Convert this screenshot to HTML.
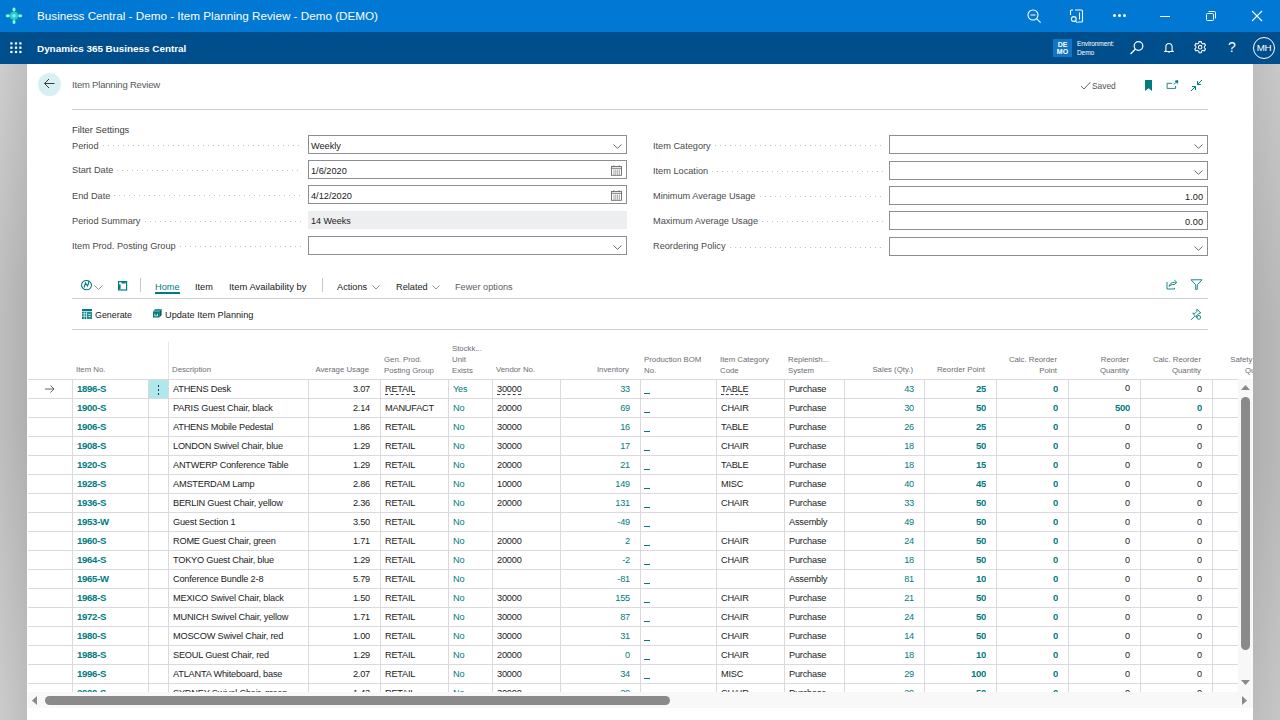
<!DOCTYPE html>
<html><head><meta charset="utf-8">
<style>
*{box-sizing:border-box;margin:0;padding:0}
html,body{width:1280px;height:720px;overflow:hidden}
body{position:relative;font-family:"Liberation Sans",sans-serif;background:#fff;color:#212121}
#lgray{position:absolute;left:0;top:64px;width:27px;height:656px;background:linear-gradient(90deg,rgba(255,255,255,0.06),rgba(0,0,0,0.05)),linear-gradient(180deg,#cacaca 0%,#bababa 35%,#b9b9b9 55%,#c8c8c8 100%)}
.abs{position:absolute}
#title{position:absolute;left:0;top:0;width:1280px;height:32px;background:#0078d4;color:#fff}
#nav{position:absolute;left:0;top:32px;width:1280px;height:32px;background:#004e8c;color:#fff}
#rgray{position:absolute;left:1253px;top:64px;width:27px;height:656px;background:linear-gradient(90deg,rgba(0,0,0,0.04),rgba(255,255,255,0.04)),linear-gradient(180deg,#c6c6c6 0%,#b6b6b6 40%,#b6b6b6 60%,#c4c4c4 100%)}
#panel{position:absolute;left:27px;top:64px;width:1226px;height:656px;background:#fff}
.lbl{position:absolute;font-size:9.2px;line-height:12px;color:#4a4a4a;white-space:nowrap;left:72px}
.dots{position:absolute;height:1px;background-image:linear-gradient(90deg,#c0c0c0 1px,transparent 1px);background-size:5px 1px}
.box{position:absolute;border:1px solid #8a8d91;background:#fff;height:19px}
.box .v{position:absolute;left:2px;top:3.5px;font-size:9.2px;line-height:12px;color:#212121;white-space:nowrap}
.box .vr{position:absolute;right:4px;top:3.5px;font-size:9.2px;line-height:12px;color:#212121}
.chev{position:absolute;right:5px;top:5px}
.c{position:absolute;height:18px;line-height:18px;font-size:9.2px;letter-spacing:-0.2px;white-space:nowrap;overflow:hidden;color:#212121}
.c.r{text-align:right}
.t{color:#007b80}
.tb{color:#007b80;font-weight:bold;font-size:9.6px;letter-spacing:-0.3px}
.ul span{text-decoration:underline dashed #444;text-decoration-thickness:1px;text-underline-offset:2px}
.hl{position:absolute;left:28px;width:1210px;height:1px;background:#d9d9de}
.vl{position:absolute;top:379px;width:1px;height:313px;background:#d9d9de}
.us{position:absolute;width:6px;height:1.2px;background:#007b80}
.hd{position:absolute;font-size:7.8px;line-height:11px;color:#6b6e73;white-space:nowrap}
.hd.r{text-align:right}
.act{position:absolute;font-size:9.2px;line-height:12px;color:#212121;white-space:nowrap;top:281px}
</style></head><body>
<div id="title">
  <svg class="abs" style="left:4px;top:6px" width="20" height="20" viewBox="0 0 20 20">
    <path d="M10 3.3L16.5 9.8 10 16.3 3.5 9.8z" fill="#0a8a8f" stroke="#0a8a8f" stroke-width="2" stroke-linejoin="round"/><circle cx="10" cy="9.8" r="5.6" fill="#0a8a8f"/>
    <circle cx="10" cy="9.8" r="4.1" fill="#1ad0dc"/>
    <circle cx="10" cy="9.8" r="1.8" fill="#8ae6ee"/>
    <ellipse cx="10" cy="3.6" rx="1.5" ry="2" fill="#9ef3fa"/>
    <ellipse cx="10" cy="16" rx="1.5" ry="2" fill="#9ef3fa"/>
    <ellipse cx="3.8" cy="9.8" rx="2" ry="1.5" fill="#9ef3fa"/>
    <ellipse cx="16.2" cy="9.8" rx="2" ry="1.5" fill="#9ef3fa"/>
  </svg>
  <div class="abs" style="left:37px;top:9px;font-size:11.7px;white-space:nowrap">Business Central - Demo - Item Planning Review - Demo (DEMO)</div>
  <svg class="abs" style="left:1026px;top:8px" width="16" height="16" viewBox="0 0 16 16" fill="none" stroke="#fff" stroke-width="1.1">
    <circle cx="7" cy="7" r="5"/><path d="M4.5 7h5M10.6 10.6l4 4"/>
  </svg>
  <svg class="abs" style="left:1069px;top:8px" width="16" height="16" viewBox="0 0 16 16" fill="none" stroke="#fff" stroke-width="1.1">
    <path d="M6 2h6.5a1 1 0 0 1 1 1v10a1 1 0 0 1-1 1H9M1.5 7V3a1 1 0 0 1 1-1H4"/><path d="M10.5 4.5v7"/><circle cx="4.8" cy="11" r="2.4"/><path d="M6.5 12.8l2 2"/>
  </svg>
  <div class="abs" style="left:1113px;top:14px;width:3px;height:3px;border-radius:50%;background:#fff"></div>
  <div class="abs" style="left:1118px;top:14px;width:3px;height:3px;border-radius:50%;background:#fff"></div>
  <div class="abs" style="left:1123px;top:14px;width:3px;height:3px;border-radius:50%;background:#fff"></div>
  <div class="abs" style="left:1160px;top:16px;width:10px;height:1px;background:#fff"></div>
  <svg class="abs" style="left:1204px;top:9px" width="14" height="14" viewBox="0 0 14 14" fill="none" stroke="#fff" stroke-width="1">
    <rect x="2.5" y="4.5" width="7" height="7" rx="1"/><path d="M4.5 2.5h6a1 1 0 0 1 1 1v6"/>
  </svg>
  <svg class="abs" style="left:1250px;top:9px" width="14" height="14" viewBox="0 0 14 14" fill="none" stroke="#fff" stroke-width="1.1">
    <path d="M2 2l10 10M12 2L2 12"/>
  </svg>
</div>
<div id="nav">
  <svg class="abs" style="left:10px;top:10px" width="12" height="12" viewBox="0 0 12 12" fill="#fff">
    <rect x="0.3" y="0.3" width="2.2" height="2.2"/><rect x="4.9" y="0.3" width="2.2" height="2.2"/><rect x="9.3" y="0.3" width="2.2" height="2.2"/>
    <rect x="0.3" y="4.6" width="2.2" height="2.2"/><rect x="4.9" y="4.6" width="2.2" height="2.2"/><rect x="9.3" y="4.6" width="2.2" height="2.2"/>
    <rect x="0.3" y="8.9" width="2.2" height="2.2"/><rect x="4.9" y="8.9" width="2.2" height="2.2"/><rect x="9.3" y="8.9" width="2.2" height="2.2"/>
  </svg>
  <div class="abs" style="left:37px;top:11px;font-size:9.9px;font-weight:bold;white-space:nowrap">Dynamics 365 Business Central</div>
  <div class="abs" style="left:1053px;top:7px;width:19px;height:18px;background:#1174c4;color:#fff;font-size:7px;font-weight:bold;line-height:7.5px;text-align:center;padding-top:1.5px">DE<br>MO</div>
  <div class="abs" style="left:1077px;top:6.5px;font-size:6.6px;letter-spacing:-0.15px;line-height:9px;white-space:nowrap">Environment:<br>Demo</div>
  <svg class="abs" style="left:1128px;top:39px;top:7px" width="18" height="18" viewBox="0 0 18 18" fill="none" stroke="#fff" stroke-width="1.2">
    <circle cx="10.5" cy="7" r="4.3"/><path d="M7.5 10L2.5 15"/>
  </svg>
  <svg class="abs" style="left:1163.5px;top:10px" width="10" height="12" viewBox="0 0 10 12" fill="none" stroke="#fff" stroke-width="1.1">
    <path d="M1.9 8.6V4.6a3.1 3.1 0 0 1 6.2 0v4l1 .9H0.9z"/><path d="M4 10.3h2L5 11.3z" fill="#fff" stroke="none"/>
  </svg>
  <svg class="abs" style="left:1194.2px;top:9.3px" width="12.3" height="12.3" viewBox="1.5 1.5 14 14" fill="none" stroke="#fff" stroke-width="1.2">
    <circle cx="8.5" cy="8.5" r="2"/>
    <path d="M7.3 2.2h2.4l.5 1.8 1.4.8 1.8-.5 1.2 2.1-1.3 1.3v1.6l1.3 1.3-1.2 2.1-1.8-.5-1.4.8-.5 1.8H7.3l-.5-1.8-1.4-.8-1.8.5-1.2-2.1 1.3-1.3V7.7L2.4 6.4l1.2-2.1 1.8.5 1.4-.8z"/>
  </svg>
  <div class="abs" style="left:1228px;top:7px;font-size:14px;white-space:nowrap">?</div>
  <div class="abs" style="left:1253px;top:5px;width:22px;height:22px;border:1.2px solid #fff;border-radius:50%;font-size:9.8px;letter-spacing:-0.4px;line-height:20px;text-align:center">MH</div>
</div>
<div id="lgray"></div><div id="rgray"></div>
<div id="panel"></div>

<!-- page header -->
<div class="abs" style="left:38px;top:73px;width:23px;height:23px;border-radius:50%;background:#d8f0f3"></div>
<svg class="abs" style="left:43px;top:77px" width="13" height="13" viewBox="0 0 13 13" fill="none" stroke="#3a3a3a" stroke-width="1">
  <path d="M1.5 6.5h10M6 2L1.5 6.5 6 11"/>
</svg>
<div class="abs" style="left:72px;top:79px;font-size:9.5px;letter-spacing:-0.2px;color:#555a60;white-space:nowrap">Item Planning Review</div>
<svg class="abs" style="left:1080px;top:81px" width="11" height="9" viewBox="0 0 11 9" fill="none" stroke="#555" stroke-width="0.9">
  <path d="M1 5l3 3 6.5-7"/>
</svg>
<div class="abs" style="left:1092px;top:80px;font-size:8.4px;line-height:12px;color:#505050;white-space:nowrap">Saved</div>
<svg class="abs" style="left:1144px;top:80px" width="9" height="11" viewBox="0 0 9 11">
  <path d="M1 0h7v11L4.5 8.3 1 11z" fill="#007b80"/>
</svg>
<svg class="abs" style="left:1166px;top:80px" width="13" height="10" viewBox="0 0 13 10" fill="none" stroke="#007b80" stroke-width="0.9">
  <path d="M6.3 3.3H1.1v5.1h8.5V5.9"/><path d="M7.6 4.6l3-2.7"/><path d="M9.2 1.1l2.7-.5-.4 2.7z" fill="#007b80"/>
</svg>
<svg class="abs" style="left:1190px;top:79px" width="13" height="13" viewBox="0 0 13 13" fill="none" stroke="#007b80" stroke-width="1">
  <path d="M12 1L7.5 5.5M7.5 2v3.5H11M1 12l4.5-4.5M2 7.5h3.5V11"/>
</svg>
<div class="abs" style="left:72px;top:109px;width:1136px;height:1px;background:#cfd0d4"></div>

<!-- filter settings -->
<div class="lbl" style="top:124px;font-size:9.4px;color:#3c3c3c">Filter Settings</div>
<div class="lbl" style="top:139.8px">Period</div>
<div class="dots" style="left:103px;top:145px;width:199px"></div>
<div class="box" style="left:308px;top:135px;width:319px"><div class="v">Weekly</div><svg class="chev" style="right:4px;top:7.5px" width="9" height="5" viewBox="0 0 9 5" fill="none" stroke="#444" stroke-width="0.8"><path d="M0.5 0.5l4 3.8 4-3.8"/></svg></div>
<div class="lbl" style="top:163.7px">Start Date</div>
<div class="dots" style="left:117px;top:170px;width:185px"></div>
<div class="box" style="left:308px;top:160px;width:319px"><div class="v">1/6/2020</div><svg class="chev" style="top:3.5px;right:4px" width="11" height="11" viewBox="0 0 11 11" fill="none" stroke="#6a6a6a" stroke-width="0.9"><rect x="0.5" y="1.5" width="10" height="8.8"/><path d="M0.5 3.3h10M2.8 0.3v1.5M8.2 0.3v1.5"/><path d="M3 4.5v5.3M4.8 4.5v5.3M6.6 4.5v5.3M8.4 4.5v5.3" stroke-width="0.6"/></svg></div>
<div class="lbl" style="top:189.8px">End Date</div>
<div class="dots" style="left:114px;top:195px;width:188px"></div>
<div class="box" style="left:308px;top:185px;width:319px"><div class="v">4/12/2020</div><svg class="chev" style="top:3.5px;right:4px" width="11" height="11" viewBox="0 0 11 11" fill="none" stroke="#6a6a6a" stroke-width="0.9"><rect x="0.5" y="1.5" width="10" height="8.8"/><path d="M0.5 3.3h10M2.8 0.3v1.5M8.2 0.3v1.5"/><path d="M3 4.5v5.3M4.8 4.5v5.3M6.6 4.5v5.3M8.4 4.5v5.3" stroke-width="0.6"/></svg></div>
<div class="lbl" style="top:214.6px">Period Summary</div>
<div class="dots" style="left:145px;top:221px;width:157px"></div>
<div class="abs" style="left:308px;top:211px;width:319px;height:18px;background:#edeef0"><div class="abs" style="left:3px;top:4px;font-size:9px;line-height:12px;color:#212121;white-space:nowrap">14 Weeks</div></div>
<div class="lbl" style="top:239.6px">Item Prod. Posting Group</div>
<div class="dots" style="left:180px;top:246px;width:122px"></div>
<div class="box" style="left:308px;top:236px;width:319px"><div class="v"></div><svg class="chev" style="right:4px;top:7.5px" width="9" height="5" viewBox="0 0 9 5" fill="none" stroke="#444" stroke-width="0.8"><path d="M0.5 0.5l4 3.8 4-3.8"/></svg></div>
<div class="lbl" style="left:653px;top:139.9px">Item Category</div>
<div class="dots" style="left:715px;top:145px;width:168px"></div>
<div class="box" style="left:889px;top:135px;width:319px"><svg class="chev" style="right:4px;top:7.5px" width="9" height="5" viewBox="0 0 9 5" fill="none" stroke="#444" stroke-width="0.8"><path d="M0.5 0.5l4 3.8 4-3.8"/></svg></div>
<div class="lbl" style="left:653px;top:164.9px">Item Location</div>
<div class="dots" style="left:712px;top:171px;width:171px"></div>
<div class="box" style="left:889px;top:161px;width:319px"><svg class="chev" style="right:4px;top:7.5px" width="9" height="5" viewBox="0 0 9 5" fill="none" stroke="#444" stroke-width="0.8"><path d="M0.5 0.5l4 3.8 4-3.8"/></svg></div>
<div class="lbl" style="left:653px;top:189.9px">Minimum Average Usage</div>
<div class="dots" style="left:760px;top:196px;width:123px"></div>
<div class="box" style="left:889px;top:186px;width:319px"><div class="vr">1.00</div></div>
<div class="lbl" style="left:653px;top:215.2px">Maximum Average Usage</div>
<div class="dots" style="left:762px;top:221px;width:121px"></div>
<div class="box" style="left:889px;top:211px;width:319px"><div class="vr">0.00</div></div>
<div class="lbl" style="left:653px;top:240.2px">Reordering Policy</div>
<div class="dots" style="left:730px;top:247px;width:153px"></div>
<div class="box" style="left:889px;top:237px;width:319px"><svg class="chev" style="right:4px;top:7.5px" width="9" height="5" viewBox="0 0 9 5" fill="none" stroke="#444" stroke-width="0.8"><path d="M0.5 0.5l4 3.8 4-3.8"/></svg></div>

<!-- action bar -->
<svg class="abs" style="left:80px;top:279px" width="13" height="12" viewBox="0 0 13 12" fill="none" stroke="#007b80" stroke-width="1.1"><path d="M6.5 1.5c2.8 0 5 2 5 4.6S9.3 10.8 6.5 10.8 1.5 8.7 1.5 6.1 3.7 1.5 6.5 1.5z"/><path d="M4 8.5l1.5-4.5 2 3 1.3-3.5M8 2.5l1 1"/></svg>
<svg class="abs" style="left:94px;top:284.5px" width="9" height="5" viewBox="0 0 9 5" fill="none" stroke="#777" stroke-width="0.8"><path d="M0.5 0.5l4 4 4-4"/></svg>
<svg class="abs" style="left:117px;top:280px" width="11" height="11" viewBox="0 0 11 11" fill="none" stroke="#007b80" stroke-width="1.2"><rect x="1.6" y="1.6" width="8" height="8.4"/><path d="M4.5 2.8h4.2M2.8 4.5v4.5" stroke-width="1.6"/></svg>
<div class="abs" style="left:140px;top:278px;width:1px;height:14px;background:#c8c8c8"></div>
<div class="act" style="left:155px;color:#007b80">Home</div>
<div class="abs" style="left:155px;top:292px;width:25px;height:1.5px;background:#007b80"></div>
<div class="act" style="left:195px">Item</div>
<div class="act" style="left:229px;font-size:9.45px">Item Availability by</div>
<div class="abs" style="left:322px;top:278px;width:1px;height:14px;background:#c8c8c8"></div>
<div class="act" style="left:337px">Actions</div>
<svg class="abs" style="left:371.5px;top:284.5px" width="8" height="5" viewBox="0 0 8 5" fill="none" stroke="#777" stroke-width="0.8"><path d="M0.5 0.5l3.5 3.5 3.5-3.5"/></svg>
<div class="act" style="left:396px">Related</div>
<svg class="abs" style="left:431.5px;top:284.5px" width="8" height="5" viewBox="0 0 8 5" fill="none" stroke="#777" stroke-width="0.8"><path d="M0.5 0.5l3.5 3.5 3.5-3.5"/></svg>
<div class="act" style="left:455px;color:#5a6068">Fewer options</div>
<svg class="abs" style="left:1166px;top:279px" width="13" height="11" viewBox="0 0 13 11" fill="none" stroke="#007b80" stroke-width="0.9"><path d="M1 3v7h7.5V8.8"/><path d="M3.2 7.5C3.5 4.8 5.5 3.3 8.5 3.3h1.3M8.3 1l2.5 2.3L8.3 5.6"/><path d="M3.2 7.5c1-1.6 2.8-2.2 5.3-2" /></svg>
<svg class="abs" style="left:1190px;top:279px" width="13" height="12" viewBox="0 0 13 12" fill="none" stroke="#007b80" stroke-width="0.9"><path d="M1 0.8h11L7.3 5.8v4.6H5.7V5.8z"/></svg>
<svg class="abs" style="left:82px;top:309px" width="10" height="10" viewBox="0 0 10 10" fill="#007b80"><rect x="0" y="0" width="10" height="2.2"/><rect x="0" y="2.9" width="1.8" height="1.6"/><rect x="2.5" y="2.9" width="1.8" height="1.6"/><rect x="0" y="5.2" width="1.8" height="1.6"/><rect x="2.5" y="5.2" width="1.8" height="1.6"/><rect x="0" y="7.5" width="1.8" height="2.5"/><rect x="2.5" y="7.5" width="1.8" height="2.5"/><path d="M5 2.9h5V10H5z" opacity="0.85"/><path d="M6.5 5.5h2M6.5 7.5h2" stroke="#fff" stroke-width="0.8"/></svg>
<div class="act" style="left:95px;top:309px;font-size:8.9px">Generate</div>
<svg class="abs" style="left:152.5px;top:309.3px" width="9" height="9" viewBox="0 0 9 9"><path d="M0 2.3h6.3V8.5H0z" fill="#007b80"/><path d="M0 2.3L2.2 0H8.6L6.3 2.3z" fill="#2b9a9e"/><path d="M6.3 2.3L8.6 0V6.2L6.3 8.5z" fill="#005f63"/><path d="M1.8 4.8v2h2.7v-2" fill="none" stroke="#fff" stroke-width="0.8"/></svg>
<div class="act" style="left:165px;top:309px">Update Item Planning</div>
<svg class="abs" style="left:1190px;top:308px" width="13" height="13" viewBox="0 0 13 13" fill="none" stroke="#007b80" stroke-width="0.9"><path d="M7 1.2l3.8 3.8-2 .5-2 2 .2 2.1L2.7 5.3l2.1.2 2-2z"/><path d="M4.8 8.2L1.2 11.8"/><circle cx="8.8" cy="9.4" r="1.9"/></svg>
<div class="abs" style="left:72px;top:298px;width:1136px;height:1px;background:#d2d3d8"></div>
<div class="abs" style="left:72px;top:329px;width:1136px;height:1px;background:#d2d3d8"></div>

<!-- table -->
<div class="abs" style="left:0;top:0;width:1253px;height:379px;overflow:hidden">
<div class="hd" style="left:76px;width:76px;top:364.3px">Item No.</div>
<div class="hd" style="left:172px;width:140px;top:364.3px">Description</div>
<div class="hd r" style="left:308px;width:61px;top:364.3px">Average Usage</div>
<div class="hd" style="left:384px;width:68px;top:354.3px">Gen. Prod.<br>Posting Group</div>
<div class="hd" style="left:452px;width:44px;top:343.3px">Stockk...<br>Unit<br>Exists</div>
<div class="hd" style="left:496px;width:68px;top:364.3px">Vendor No.</div>
<div class="hd r" style="left:560px;width:69px;top:364.3px">Inventory</div>
<div class="hd" style="left:644px;width:76px;top:354.3px">Production BOM<br>No.</div>
<div class="hd" style="left:720px;width:68px;top:354.3px">Item Category<br>Code</div>
<div class="hd" style="left:788px;width:60px;top:354.3px">Replenish...<br>System</div>
<div class="hd r" style="left:844px;width:69px;top:364.3px">Sales (Qty.)</div>
<div class="hd r" style="left:924px;width:61px;top:364.3px">Reorder Point</div>
<div class="hd r" style="left:996px;width:61px;top:354.3px">Calc. Reorder<br>Point</div>
<div class="hd r" style="left:1068px;width:61px;top:354.3px">Reorder<br>Quantity</div>
<div class="hd r" style="left:1140px;width:61px;top:354.3px">Calc. Reorder<br>Quantity</div>
<div class="hd r" style="left:1212px;width:62px;top:354.3px">Safety Stock<br>Quantity</div>
</div>
<div class="abs" style="left:0;top:0;width:1238px;height:692px;overflow:hidden">
<div class="abs" style="left:168px;top:342px;width:1px;height:37px;background:#e6e6ea"></div>
<div class="abs" style="left:149px;top:380px;width:19px;height:18px;background:#afe8ea"></div>
<div class="hl" style="top:379px"></div>
<div class="c tb" style="left:77px;width:71px;top:380px">1896-S</div>
<div class="c " style="left:173px;width:135px;top:380px">ATHENS Desk</div>
<div class="c r " style="left:308px;width:62px;top:380px">3.07</div>
<div class="c ul" style="left:385px;width:63px;top:380px"><span>RETAIL</span></div>
<div class="c t" style="left:453px;width:39px;top:380px">Yes</div>
<div class="c ul" style="left:497px;width:63px;top:380px"><span>30000</span></div>
<div class="c r t" style="left:560px;width:70px;top:380px">33</div>
<div class="us" style="left:644px;top:393px"></div>
<div class="c ul" style="left:721px;width:63px;top:380px"><span>TABLE</span></div>
<div class="c " style="left:789px;width:55px;top:380px">Purchase</div>
<div class="c r t" style="left:844px;width:70px;top:380px">43</div>
<div class="c r tb" style="left:924px;width:62px;top:380px">25</div>
<div class="c r tb" style="left:996px;width:62px;top:380px">0</div>
<div class="c r " style="left:1068px;width:62px;top:379px">0</div>
<div class="c r " style="left:1140px;width:62px;top:380px">0</div>
<div class="hl" style="top:398px"></div>
<div class="c tb" style="left:77px;width:71px;top:399px">1900-S</div>
<div class="c " style="left:173px;width:135px;top:399px">PARIS Guest Chair, black</div>
<div class="c r " style="left:308px;width:62px;top:399px">2.14</div>
<div class="c " style="left:385px;width:63px;top:399px">MANUFACT</div>
<div class="c t" style="left:453px;width:39px;top:399px">No</div>
<div class="c " style="left:497px;width:63px;top:399px">20000</div>
<div class="c r t" style="left:560px;width:70px;top:399px">69</div>
<div class="us" style="left:644px;top:412px"></div>
<div class="c " style="left:721px;width:63px;top:399px">CHAIR</div>
<div class="c " style="left:789px;width:55px;top:399px">Purchase</div>
<div class="c r t" style="left:844px;width:70px;top:399px">30</div>
<div class="c r tb" style="left:924px;width:62px;top:399px">50</div>
<div class="c r tb" style="left:996px;width:62px;top:399px">0</div>
<div class="c r tb" style="left:1068px;width:62px;top:399px">500</div>
<div class="c r tb" style="left:1140px;width:62px;top:399px">0</div>
<div class="hl" style="top:417px"></div>
<div class="c tb" style="left:77px;width:71px;top:418px">1906-S</div>
<div class="c " style="left:173px;width:135px;top:418px">ATHENS Mobile Pedestal</div>
<div class="c r " style="left:308px;width:62px;top:418px">1.86</div>
<div class="c " style="left:385px;width:63px;top:418px">RETAIL</div>
<div class="c t" style="left:453px;width:39px;top:418px">No</div>
<div class="c " style="left:497px;width:63px;top:418px">30000</div>
<div class="c r t" style="left:560px;width:70px;top:418px">16</div>
<div class="us" style="left:644px;top:431px"></div>
<div class="c " style="left:721px;width:63px;top:418px">TABLE</div>
<div class="c " style="left:789px;width:55px;top:418px">Purchase</div>
<div class="c r t" style="left:844px;width:70px;top:418px">26</div>
<div class="c r tb" style="left:924px;width:62px;top:418px">25</div>
<div class="c r tb" style="left:996px;width:62px;top:418px">0</div>
<div class="c r " style="left:1068px;width:62px;top:418px">0</div>
<div class="c r " style="left:1140px;width:62px;top:418px">0</div>
<div class="hl" style="top:436px"></div>
<div class="c tb" style="left:77px;width:71px;top:437px">1908-S</div>
<div class="c " style="left:173px;width:135px;top:437px">LONDON Swivel Chair, blue</div>
<div class="c r " style="left:308px;width:62px;top:437px">1.29</div>
<div class="c " style="left:385px;width:63px;top:437px">RETAIL</div>
<div class="c t" style="left:453px;width:39px;top:437px">No</div>
<div class="c " style="left:497px;width:63px;top:437px">30000</div>
<div class="c r t" style="left:560px;width:70px;top:437px">17</div>
<div class="us" style="left:644px;top:450px"></div>
<div class="c " style="left:721px;width:63px;top:437px">CHAIR</div>
<div class="c " style="left:789px;width:55px;top:437px">Purchase</div>
<div class="c r t" style="left:844px;width:70px;top:437px">18</div>
<div class="c r tb" style="left:924px;width:62px;top:437px">50</div>
<div class="c r tb" style="left:996px;width:62px;top:437px">0</div>
<div class="c r " style="left:1068px;width:62px;top:437px">0</div>
<div class="c r " style="left:1140px;width:62px;top:437px">0</div>
<div class="hl" style="top:455px"></div>
<div class="c tb" style="left:77px;width:71px;top:456px">1920-S</div>
<div class="c " style="left:173px;width:135px;top:456px">ANTWERP Conference Table</div>
<div class="c r " style="left:308px;width:62px;top:456px">1.29</div>
<div class="c " style="left:385px;width:63px;top:456px">RETAIL</div>
<div class="c t" style="left:453px;width:39px;top:456px">No</div>
<div class="c " style="left:497px;width:63px;top:456px">20000</div>
<div class="c r t" style="left:560px;width:70px;top:456px">21</div>
<div class="us" style="left:644px;top:469px"></div>
<div class="c " style="left:721px;width:63px;top:456px">TABLE</div>
<div class="c " style="left:789px;width:55px;top:456px">Purchase</div>
<div class="c r t" style="left:844px;width:70px;top:456px">18</div>
<div class="c r tb" style="left:924px;width:62px;top:456px">15</div>
<div class="c r tb" style="left:996px;width:62px;top:456px">0</div>
<div class="c r " style="left:1068px;width:62px;top:456px">0</div>
<div class="c r " style="left:1140px;width:62px;top:456px">0</div>
<div class="hl" style="top:474px"></div>
<div class="c tb" style="left:77px;width:71px;top:475px">1928-S</div>
<div class="c " style="left:173px;width:135px;top:475px">AMSTERDAM Lamp</div>
<div class="c r " style="left:308px;width:62px;top:475px">2.86</div>
<div class="c " style="left:385px;width:63px;top:475px">RETAIL</div>
<div class="c t" style="left:453px;width:39px;top:475px">No</div>
<div class="c " style="left:497px;width:63px;top:475px">10000</div>
<div class="c r t" style="left:560px;width:70px;top:475px">149</div>
<div class="us" style="left:644px;top:488px"></div>
<div class="c " style="left:721px;width:63px;top:475px">MISC</div>
<div class="c " style="left:789px;width:55px;top:475px">Purchase</div>
<div class="c r t" style="left:844px;width:70px;top:475px">40</div>
<div class="c r tb" style="left:924px;width:62px;top:475px">45</div>
<div class="c r tb" style="left:996px;width:62px;top:475px">0</div>
<div class="c r " style="left:1068px;width:62px;top:475px">0</div>
<div class="c r " style="left:1140px;width:62px;top:475px">0</div>
<div class="hl" style="top:493px"></div>
<div class="c tb" style="left:77px;width:71px;top:494px">1936-S</div>
<div class="c " style="left:173px;width:135px;top:494px">BERLIN Guest Chair, yellow</div>
<div class="c r " style="left:308px;width:62px;top:494px">2.36</div>
<div class="c " style="left:385px;width:63px;top:494px">RETAIL</div>
<div class="c t" style="left:453px;width:39px;top:494px">No</div>
<div class="c " style="left:497px;width:63px;top:494px">20000</div>
<div class="c r t" style="left:560px;width:70px;top:494px">131</div>
<div class="us" style="left:644px;top:507px"></div>
<div class="c " style="left:721px;width:63px;top:494px">CHAIR</div>
<div class="c " style="left:789px;width:55px;top:494px">Purchase</div>
<div class="c r t" style="left:844px;width:70px;top:494px">33</div>
<div class="c r tb" style="left:924px;width:62px;top:494px">50</div>
<div class="c r tb" style="left:996px;width:62px;top:494px">0</div>
<div class="c r " style="left:1068px;width:62px;top:494px">0</div>
<div class="c r " style="left:1140px;width:62px;top:494px">0</div>
<div class="hl" style="top:512px"></div>
<div class="c tb" style="left:77px;width:71px;top:513px">1953-W</div>
<div class="c " style="left:173px;width:135px;top:513px">Guest Section 1</div>
<div class="c r " style="left:308px;width:62px;top:513px">3.50</div>
<div class="c " style="left:385px;width:63px;top:513px">RETAIL</div>
<div class="c t" style="left:453px;width:39px;top:513px">No</div>

<div class="c r t" style="left:560px;width:70px;top:513px">-49</div>
<div class="us" style="left:644px;top:526px"></div>

<div class="c " style="left:789px;width:55px;top:513px">Assembly</div>
<div class="c r t" style="left:844px;width:70px;top:513px">49</div>
<div class="c r tb" style="left:924px;width:62px;top:513px">50</div>
<div class="c r tb" style="left:996px;width:62px;top:513px">0</div>
<div class="c r " style="left:1068px;width:62px;top:513px">0</div>
<div class="c r " style="left:1140px;width:62px;top:513px">0</div>
<div class="hl" style="top:531px"></div>
<div class="c tb" style="left:77px;width:71px;top:532px">1960-S</div>
<div class="c " style="left:173px;width:135px;top:532px">ROME Guest Chair, green</div>
<div class="c r " style="left:308px;width:62px;top:532px">1.71</div>
<div class="c " style="left:385px;width:63px;top:532px">RETAIL</div>
<div class="c t" style="left:453px;width:39px;top:532px">No</div>
<div class="c " style="left:497px;width:63px;top:532px">20000</div>
<div class="c r t" style="left:560px;width:70px;top:532px">2</div>
<div class="us" style="left:644px;top:545px"></div>
<div class="c " style="left:721px;width:63px;top:532px">CHAIR</div>
<div class="c " style="left:789px;width:55px;top:532px">Purchase</div>
<div class="c r t" style="left:844px;width:70px;top:532px">24</div>
<div class="c r tb" style="left:924px;width:62px;top:532px">50</div>
<div class="c r tb" style="left:996px;width:62px;top:532px">0</div>
<div class="c r " style="left:1068px;width:62px;top:532px">0</div>
<div class="c r " style="left:1140px;width:62px;top:532px">0</div>
<div class="hl" style="top:550px"></div>
<div class="c tb" style="left:77px;width:71px;top:551px">1964-S</div>
<div class="c " style="left:173px;width:135px;top:551px">TOKYO Guest Chair, blue</div>
<div class="c r " style="left:308px;width:62px;top:551px">1.29</div>
<div class="c " style="left:385px;width:63px;top:551px">RETAIL</div>
<div class="c t" style="left:453px;width:39px;top:551px">No</div>
<div class="c " style="left:497px;width:63px;top:551px">20000</div>
<div class="c r t" style="left:560px;width:70px;top:551px">-2</div>
<div class="us" style="left:644px;top:564px"></div>
<div class="c " style="left:721px;width:63px;top:551px">CHAIR</div>
<div class="c " style="left:789px;width:55px;top:551px">Purchase</div>
<div class="c r t" style="left:844px;width:70px;top:551px">18</div>
<div class="c r tb" style="left:924px;width:62px;top:551px">50</div>
<div class="c r tb" style="left:996px;width:62px;top:551px">0</div>
<div class="c r " style="left:1068px;width:62px;top:551px">0</div>
<div class="c r " style="left:1140px;width:62px;top:551px">0</div>
<div class="hl" style="top:569px"></div>
<div class="c tb" style="left:77px;width:71px;top:570px">1965-W</div>
<div class="c " style="left:173px;width:135px;top:570px">Conference Bundle 2-8</div>
<div class="c r " style="left:308px;width:62px;top:570px">5.79</div>
<div class="c " style="left:385px;width:63px;top:570px">RETAIL</div>
<div class="c t" style="left:453px;width:39px;top:570px">No</div>

<div class="c r t" style="left:560px;width:70px;top:570px">-81</div>
<div class="us" style="left:644px;top:583px"></div>

<div class="c " style="left:789px;width:55px;top:570px">Assembly</div>
<div class="c r t" style="left:844px;width:70px;top:570px">81</div>
<div class="c r tb" style="left:924px;width:62px;top:570px">10</div>
<div class="c r tb" style="left:996px;width:62px;top:570px">0</div>
<div class="c r " style="left:1068px;width:62px;top:570px">0</div>
<div class="c r " style="left:1140px;width:62px;top:570px">0</div>
<div class="hl" style="top:588px"></div>
<div class="c tb" style="left:77px;width:71px;top:589px">1968-S</div>
<div class="c " style="left:173px;width:135px;top:589px">MEXICO Swivel Chair, black</div>
<div class="c r " style="left:308px;width:62px;top:589px">1.50</div>
<div class="c " style="left:385px;width:63px;top:589px">RETAIL</div>
<div class="c t" style="left:453px;width:39px;top:589px">No</div>
<div class="c " style="left:497px;width:63px;top:589px">30000</div>
<div class="c r t" style="left:560px;width:70px;top:589px">155</div>
<div class="us" style="left:644px;top:602px"></div>
<div class="c " style="left:721px;width:63px;top:589px">CHAIR</div>
<div class="c " style="left:789px;width:55px;top:589px">Purchase</div>
<div class="c r t" style="left:844px;width:70px;top:589px">21</div>
<div class="c r tb" style="left:924px;width:62px;top:589px">50</div>
<div class="c r tb" style="left:996px;width:62px;top:589px">0</div>
<div class="c r " style="left:1068px;width:62px;top:589px">0</div>
<div class="c r " style="left:1140px;width:62px;top:589px">0</div>
<div class="hl" style="top:607px"></div>
<div class="c tb" style="left:77px;width:71px;top:608px">1972-S</div>
<div class="c " style="left:173px;width:135px;top:608px">MUNICH Swivel Chair, yellow</div>
<div class="c r " style="left:308px;width:62px;top:608px">1.71</div>
<div class="c " style="left:385px;width:63px;top:608px">RETAIL</div>
<div class="c t" style="left:453px;width:39px;top:608px">No</div>
<div class="c " style="left:497px;width:63px;top:608px">30000</div>
<div class="c r t" style="left:560px;width:70px;top:608px">87</div>
<div class="us" style="left:644px;top:621px"></div>
<div class="c " style="left:721px;width:63px;top:608px">CHAIR</div>
<div class="c " style="left:789px;width:55px;top:608px">Purchase</div>
<div class="c r t" style="left:844px;width:70px;top:608px">24</div>
<div class="c r tb" style="left:924px;width:62px;top:608px">50</div>
<div class="c r tb" style="left:996px;width:62px;top:608px">0</div>
<div class="c r " style="left:1068px;width:62px;top:608px">0</div>
<div class="c r " style="left:1140px;width:62px;top:608px">0</div>
<div class="hl" style="top:626px"></div>
<div class="c tb" style="left:77px;width:71px;top:627px">1980-S</div>
<div class="c " style="left:173px;width:135px;top:627px">MOSCOW Swivel Chair, red</div>
<div class="c r " style="left:308px;width:62px;top:627px">1.00</div>
<div class="c " style="left:385px;width:63px;top:627px">RETAIL</div>
<div class="c t" style="left:453px;width:39px;top:627px">No</div>
<div class="c " style="left:497px;width:63px;top:627px">30000</div>
<div class="c r t" style="left:560px;width:70px;top:627px">31</div>
<div class="us" style="left:644px;top:640px"></div>
<div class="c " style="left:721px;width:63px;top:627px">CHAIR</div>
<div class="c " style="left:789px;width:55px;top:627px">Purchase</div>
<div class="c r t" style="left:844px;width:70px;top:627px">14</div>
<div class="c r tb" style="left:924px;width:62px;top:627px">50</div>
<div class="c r tb" style="left:996px;width:62px;top:627px">0</div>
<div class="c r " style="left:1068px;width:62px;top:627px">0</div>
<div class="c r " style="left:1140px;width:62px;top:627px">0</div>
<div class="hl" style="top:645px"></div>
<div class="c tb" style="left:77px;width:71px;top:646px">1988-S</div>
<div class="c " style="left:173px;width:135px;top:646px">SEOUL Guest Chair, red</div>
<div class="c r " style="left:308px;width:62px;top:646px">1.29</div>
<div class="c " style="left:385px;width:63px;top:646px">RETAIL</div>
<div class="c t" style="left:453px;width:39px;top:646px">No</div>
<div class="c " style="left:497px;width:63px;top:646px">20000</div>
<div class="c r t" style="left:560px;width:70px;top:646px">0</div>
<div class="us" style="left:644px;top:659px"></div>
<div class="c " style="left:721px;width:63px;top:646px">CHAIR</div>
<div class="c " style="left:789px;width:55px;top:646px">Purchase</div>
<div class="c r t" style="left:844px;width:70px;top:646px">18</div>
<div class="c r tb" style="left:924px;width:62px;top:646px">10</div>
<div class="c r tb" style="left:996px;width:62px;top:646px">0</div>
<div class="c r " style="left:1068px;width:62px;top:646px">0</div>
<div class="c r " style="left:1140px;width:62px;top:646px">0</div>
<div class="hl" style="top:664px"></div>
<div class="c tb" style="left:77px;width:71px;top:665px">1996-S</div>
<div class="c " style="left:173px;width:135px;top:665px">ATLANTA Whiteboard, base</div>
<div class="c r " style="left:308px;width:62px;top:665px">2.07</div>
<div class="c " style="left:385px;width:63px;top:665px">RETAIL</div>
<div class="c t" style="left:453px;width:39px;top:665px">No</div>
<div class="c " style="left:497px;width:63px;top:665px">30000</div>
<div class="c r t" style="left:560px;width:70px;top:665px">34</div>
<div class="us" style="left:644px;top:678px"></div>
<div class="c " style="left:721px;width:63px;top:665px">MISC</div>
<div class="c " style="left:789px;width:55px;top:665px">Purchase</div>
<div class="c r t" style="left:844px;width:70px;top:665px">29</div>
<div class="c r tb" style="left:924px;width:62px;top:665px">100</div>
<div class="c r tb" style="left:996px;width:62px;top:665px">0</div>
<div class="c r " style="left:1068px;width:62px;top:665px">0</div>
<div class="c r " style="left:1140px;width:62px;top:665px">0</div>
<div class="hl" style="top:683px"></div>
<div class="c tb" style="left:77px;width:71px;top:684px">2000-S</div>
<div class="c " style="left:173px;width:135px;top:684px">SYDNEY Swivel Chair, green</div>
<div class="c r " style="left:308px;width:62px;top:684px">1.43</div>
<div class="c " style="left:385px;width:63px;top:684px">RETAIL</div>
<div class="c t" style="left:453px;width:39px;top:684px">No</div>
<div class="c " style="left:497px;width:63px;top:684px">30000</div>
<div class="c r t" style="left:560px;width:70px;top:684px">29</div>
<div class="us" style="left:644px;top:697px"></div>
<div class="c " style="left:721px;width:63px;top:684px">CHAIR</div>
<div class="c " style="left:789px;width:55px;top:684px">Purchase</div>
<div class="c r t" style="left:844px;width:70px;top:684px">29</div>
<div class="c r tb" style="left:924px;width:62px;top:684px">50</div>
<div class="c r tb" style="left:996px;width:62px;top:684px">0</div>
<div class="c r " style="left:1068px;width:62px;top:684px">0</div>
<div class="c r " style="left:1140px;width:62px;top:684px">0</div>
<div class="vl" style="left:72px"></div>
<div class="vl" style="left:148px"></div>
<div class="vl" style="left:168px"></div>
<div class="vl" style="left:308px"></div>
<div class="vl" style="left:380px"></div>
<div class="vl" style="left:448px"></div>
<div class="vl" style="left:492px"></div>
<div class="vl" style="left:560px"></div>
<div class="vl" style="left:640px"></div>
<div class="vl" style="left:716px"></div>
<div class="vl" style="left:784px"></div>
<div class="vl" style="left:844px"></div>
<div class="vl" style="left:924px"></div>
<div class="vl" style="left:996px"></div>
<div class="vl" style="left:1068px"></div>
<div class="vl" style="left:1140px"></div>
<div class="vl" style="left:1212px"></div>
<div class="hl" style="top:702px"></div>
</div>
<svg class="abs" style="left:44px;top:384px" width="11" height="10" viewBox="0 0 11 10" fill="none" stroke="#555" stroke-width="0.9">
  <path d="M1 5h9M6.5 1.5L10 5 6.5 8.5"/>
</svg>
<div class="abs" style="left:157.5px;top:385px;width:1.5px;height:1.6px;background:#2a3550"></div>
<div class="abs" style="left:157.5px;top:389px;width:1.5px;height:1.6px;background:#2a3550"></div>
<div class="abs" style="left:157.5px;top:393px;width:1.5px;height:1.6px;background:#2a3550"></div>

<!-- scrollbars -->
<div class="abs" style="left:1238px;top:379px;width:15px;height:313px;background:#f8f8f8"></div>
<svg class="abs" style="left:1240px;top:384px" width="11" height="7" viewBox="0 0 11 7"><path d="M1 6L5.5 1 10 6z" fill="#8a8a8a"/></svg>
<div class="abs" style="left:1241px;top:397px;width:9px;height:253px;border-radius:4.5px;background:#8a8a8a"></div>
<svg class="abs" style="left:1240px;top:679px" width="11" height="7" viewBox="0 0 11 7"><path d="M1 1L5.5 6 10 1z" fill="#8a8a8a"/></svg>
<div class="abs" style="left:28px;top:692px;width:1225px;height:16px;background:#f8f8f8"></div>
<svg class="abs" style="left:31px;top:695px" width="7" height="11" viewBox="0 0 7 11"><path d="M6 1L1 5.5 6 10z" fill="#8a8a8a"/></svg>
<div class="abs" style="left:45px;top:696px;width:625px;height:9px;border-radius:4.5px;background:#8a8a8a"></div>
<svg class="abs" style="left:1241px;top:695px" width="7" height="11" viewBox="0 0 7 11"><path d="M1 1L6 5.5 1 10z" fill="#8a8a8a"/></svg>
</body></html>
